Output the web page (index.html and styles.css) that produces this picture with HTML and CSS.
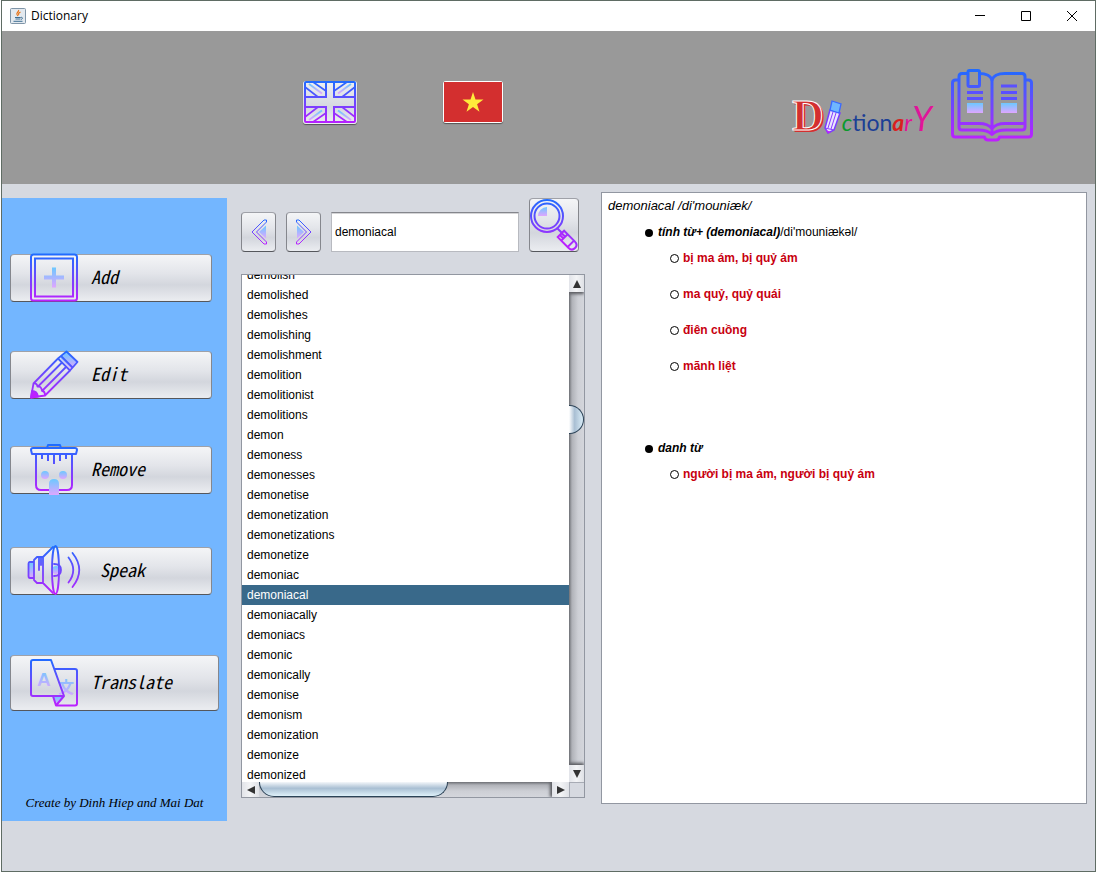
FILE: index.html
```html
<!DOCTYPE html>
<html lang="en">
<head>
<meta charset="utf-8">
<title>Dictionary</title>
<link rel="stylesheet" href="styles.css">
</head>
<body>
<svg class="defs" width="0" height="0" aria-hidden="true">
  <defs>
    <linearGradient id="line" gradientUnits="userSpaceOnUse" x1="0" y1="0" x2="0" y2="48"><stop offset="0" stop-color="#1f6cff"/><stop offset="1" stop-color="#c01fff"/></linearGradient>
    <linearGradient id="lineSmall" gradientUnits="userSpaceOnUse" x1="0" y1="0" x2="0" y2="26"><stop offset="0" stop-color="#1f6cff"/><stop offset="1" stop-color="#c01fff"/></linearGradient>
    <linearGradient id="lineFlag" gradientUnits="userSpaceOnUse" x1="0" y1="0" x2="0" y2="42"><stop offset="0" stop-color="#1f6cff"/><stop offset="1" stop-color="#b81fff"/></linearGradient>
    <linearGradient id="lineBook" gradientUnits="userSpaceOnUse" x1="0" y1="0" x2="0" y2="72"><stop offset="0" stop-color="#1f6cff"/><stop offset="1" stop-color="#c01fff"/></linearGradient>
    <linearGradient id="soft" x1="0" y1="0" x2="0" y2="1"><stop offset="0" stop-color="#6cc8ff"/><stop offset="1" stop-color="#dfa6ff"/></linearGradient>
  </defs>
</svg>
<div class="window">
  <div class="titlebar">
    <svg class="java" viewBox="0 0 16 16" aria-hidden="true">
      <rect x=".5" y=".5" width="15" height="15" rx="1" fill="#e3e9ef" stroke="#7f95a8"/>
      <path d="M8.500 2c1 1.500-2.500 2.500-1.500 4.500l1 1.500M10.500 4c-2 1-2.500 1.800-1.500 3" fill="none" stroke="#e8751a" stroke-width="1.200"/>
      <path d="M5 9.500h5.500M5.500 11h5M10.500 9.500c2.500-.8 2.500 1.500.5 2M3.500 13.300h9" fill="none" stroke="#3e6e93" stroke-width="1"/>
    </svg>
    <span class="title">Dictionary</span>
    <button class="sys" aria-label="Minimize"><svg viewBox="0 0 12 12"><path d="M1 5.500h10"/></svg></button>
    <button class="sys" aria-label="Maximize"><svg viewBox="0 0 12 12"><path d="M1.500 1.500h9v9h-9z"/></svg></button>
    <button class="sys" aria-label="Close"><svg viewBox="0 0 12 12"><path d="M1 1l10 10M11 1L1 11"/></svg></button>
  </div>

  <header class="header">
    <button class="flag flag-uk" aria-label="English">
      <svg viewBox="0 0 52 42">
        <g fill="none" stroke="url(#soft)" stroke-width="2">
          <path d="M5 3L18 12.500"/><path d="M47 3L34 12.500"/><path d="M5 39L18 29.500"/><path d="M47 39L34 29.500"/>
        </g>
        <g fill="none" stroke="url(#lineFlag)" stroke-width="2">
          <rect x="1" y="1" width="50" height="40" rx="1"/>
          <path d="M22 1v15H1M30 1v15h21M22 41V26H1M30 41V26h21"/>
          <path d="M1 6l13 10M9 1l13 9M51 6L38 16M43 1L30 10M1 36l13-10M9 41l13-9M51 36L38 26M43 41L30 32" stroke-width="1.600"/>
        </g>
      </svg>
    </button>
    <button class="flag flag-vn" aria-label="Tiếng Việt">
      <svg viewBox="0 0 58 40"><path fill="#d32f2f" d="M0 0h58v40H0z"/><path fill="#ffeb3b" d="M29 10l2.500 7.500h8l-6.400 4.700 2.400 7.600-6.500-4.700-6.500 4.700 2.400-7.600-6.400-4.700h8z"/></svg>
    </button>
    <h1 class="logo" aria-label="Dictionary">
      <span class="cap">D</span>
      <svg class="logo-pencil" viewBox="0 0 18 34" aria-hidden="true">
        <path d="M6 10L1 28l3 5 6-3 6-17z" fill="#e9e6ff" stroke="#7a3cff" stroke-width="1.500"/>
        <path d="M8 1l9 3-2 9-9-3z" fill="#6fb6ff" stroke="#3a68ff" stroke-width="1.300"/>
        <path d="M9 12L4 28M12 13L7 29M1 28l9 2" fill="none" stroke="#8a3cff"/>
        <path d="M2 30l2 3.500 3-1.500z" fill="#c01fff"/>
      </svg>
      <span class="letters"><span class="green">c</span><span class="blue">tion</span><span class="red">a</span><span class="pink">r</span><span class="pink tall">Y</span></span>
    </h1>
    <svg class="book" viewBox="0 0 82 72" aria-hidden="true">
      <g fill="none" stroke="url(#lineBook)" stroke-width="3" stroke-linejoin="round">
        <path d="M8 11H4.500Q1.500 11 1.500 14V65Q1.500 68 4.500 68H33.500Q34 71 37 71H45Q48 71 48.500 68H77.500Q80.500 68 80.500 65V14Q80.500 11 77.500 11H74"/>
        <path d="M17 4.500H11Q8 4.500 8 7.500V58Q8 61 11 61H27Q37 61 41 65.500Q45 61 55 61H71Q74 61 74 58V7.500Q74 4.500 71 4.500H54Q43 4.500 41 11Q39 4.500 28 4.500"/>
        <path d="M41 11V65M8 54.500H28Q37 54.500 41 59.500Q45 54.500 54 54.500H74"/>
        <path d="M17 3Q17 1.500 18.500 1.500H27Q28.500 1.500 28.500 3V16Q28.500 17.500 27 17.500H18.500Q17 17.500 17 16Z"/>
        <path d="M16 23.500H32M16 29.500H32M50 17H66M50 23.500H66M50 29.500H66" stroke="#5a50ff"/>
      </g>
      <rect x="16" y="34" width="16" height="10" fill="url(#soft)"/><rect x="50" y="34" width="16" height="10" fill="url(#soft)"/>
    </svg>
  </header>

  <main class="main">
    <nav class="sidebar">
      <button class="btn action">
        <svg class="icon" viewBox="0 0 48 48"><g fill="none" stroke="url(#line)" stroke-width="2"><rect x="1" y="0.500" width="46" height="46" rx="2.500"/><rect x="5" y="4.500" width="38" height="38"/></g><path fill="url(#soft)" d="M22 13.500h4v8h8v4h-8v8h-4v-8h-8v-4h8z"/></svg>Add</button>
      <button class="btn action edit">
        <svg class="icon" viewBox="0 0 48 48"><path d="M36.500 1L47.500 11L41 18L30.500 7.500Z" fill="url(#soft)"/><g fill="none" stroke="url(#line)" stroke-width="1.800" stroke-linejoin="round"><path d="M36.500 .5L47.500 11L40 19.500L28 7.500Z"/><path d="M31 5L42.500 16.500"/><path d="M28 7.500L3.500 32.500L1 46.500L15 44.500L40 19.500M32 11.500L7.500 36M36.500 15.500L12 40M3.500 32.500Q7 32 7.500 35.500Q11.500 35 12 40Q15 40 15 44.500"/><path d="M2 40Q7 40 8 45.500L1 46.500Z" fill="#c01fff"/></g></svg>Edit</button>
      <button class="btn action remove">
        <svg class="icon" viewBox="0 0 48 48"><g fill="none" stroke="url(#line)" stroke-width="2" stroke-linejoin="round"><path d="M17 2L18-1H30L31 2M3 2H45Q47 2 47 4L46 8H2L1 4Q1 2 3 2ZM6 8V39Q6 44 11 44H37Q42 44 42 39V8M12 8v5M18 8v7M24 8v10M30 8v7M36 8v5"/></g><g fill="url(#soft)"><circle cx="15" cy="29" r="4"/><circle cx="33" cy="29" r="4"/><path d="M19 49V38Q19 33 24 33Q29 33 29 38V49Z"/></g></svg>Remove</button>
      <button class="btn action speak">
        <svg class="icon" viewBox="0 0 48 48"><rect x="-1.500" y="15" width="5.500" height="16" rx="2" fill="url(#soft)"/><circle cx="26" cy="23" r="4" fill="url(#soft)"/><g fill="none" stroke="url(#line)" stroke-width="1.800" stroke-linejoin="round" stroke-linecap="round"><path d="M4 15H0Q-1.500 15-1.500 17V29Q-1.500 31 0 31H4M7 10H13V36H7L4 33V13ZM9 10V23M11 10V18M13 10L23 0M13 36L23 46"/><ellipse cx="25.500" cy="23" rx="3.500" ry="24"/><path d="M24 17Q31 17 31 23Q31 29 24 29"/><path d="M38.500 10.500Q48 23 38.500 35.500M42.500 6Q56 23 42.500 40"/></g></svg>Speak</button>
      <button class="btn action translate">
        <svg class="icon" viewBox="0 0 48 48"><path d="M23 37H34L26 46Z" fill="url(#soft)"/><g fill="url(#soft)"><text class="glyph-a" x="7" y="27">A</text><text class="glyph-w" x="28" y="34">文</text></g><g fill="none" stroke="url(#line)" stroke-width="2" stroke-linejoin="round"><path d="M3 1H21L34 37H3Q1 37 1 35V3Q1 1 3 1ZM24.500 10H45Q47 10 47 12V44.500Q47 46.500 45 46.500H26L23 37M34 37L26 46.500"/></g></svg>Translate</button>
      <p class="credit">Create by Dinh Hiep and Mai Dat</p>
    </nav>

    <section class="browse">
      <form class="toolbar">
        <button type="button" class="btn step" aria-label="Previous"><svg viewBox="0 0 16 26"><path d="M1 13L13 1H15.500V3L5.500 13L15.500 23V25H13Z" fill="none" stroke="url(#lineSmall)"/><path d="M8 13L15 6.500V19.500Z" fill="url(#soft)"/></svg></button>
        <button type="button" class="btn step" aria-label="Next"><svg viewBox="0 0 16 26"><path d="M15 13L3 1H.5V3L10.500 13L.5 23V25H3Z" fill="none" stroke="url(#lineSmall)"/><path d="M8 13L1 6.500V19.500Z" fill="url(#soft)"/></svg></button>
        <input class="query" type="text" value="demoniacal" aria-label="Search word">
        <button type="button" class="btn search" aria-label="Search"><svg viewBox="0 0 48 52"><path d="M8 17A9 9 0 0 1 17 8V17Z" fill="url(#soft)"/><g fill="none" stroke="url(#line)" stroke-width="2"><circle cx="17" cy="17" r="16"/><circle cx="17" cy="17" r="12.500"/><path d="M27 29L32 34"/><g transform="rotate(45 38 42)"><path d="M28 37.500h15q5 0 5 4.500t-5 4.500H28zM33 37.500v9M28 41h5M28 43.500h5M42 37.500v9"/></g></g></svg></button>
      </form>
      <div class="listbox">
        <ul class="words" role="listbox" aria-label="Words">
          <li role="option">demolish</li><li role="option">demolished</li><li role="option">demolishes</li><li role="option">demolishing</li><li role="option">demolishment</li><li role="option">demolition</li><li role="option">demolitionist</li><li role="option">demolitions</li><li role="option">demon</li><li role="option">demoness</li><li role="option">demonesses</li><li role="option">demonetise</li><li role="option">demonetization</li><li role="option">demonetizations</li><li role="option">demonetize</li><li role="option">demoniac</li><li role="option" aria-selected="true">demoniacal</li><li role="option">demoniacally</li><li role="option">demoniacs</li><li role="option">demonic</li><li role="option">demonically</li><li role="option">demonise</li><li role="option">demonism</li><li role="option">demonization</li><li role="option">demonize</li><li role="option">demonized</li>
        </ul>
        <div class="vbar">
          <button class="arrow up" aria-label="Scroll up"><svg viewBox="0 0 8 8"><path d="M4 0L8 8H0z"/></svg></button>
          <span class="vthumb"></span>
          <button class="arrow down" aria-label="Scroll down"><svg viewBox="0 0 8 8"><path d="M0 0H8L4 8z"/></svg></button>
        </div>
        <div class="hbar">
          <button class="arrow left" aria-label="Scroll left"><svg viewBox="0 0 8 8"><path d="M8 0V8L0 4z"/></svg></button>
          <span class="hthumb"></span>
          <button class="arrow right" aria-label="Scroll right"><svg viewBox="0 0 8 8"><path d="M0 0L8 4L0 8z"/></svg></button>
        </div>
        <span class="corner"></span>
      </div>
    </section>

    <article class="detail">
      <p class="head">demoniacal /di'mouniæk/</p>
      <ul class="senses">
        <li><p><b>tính từ+ (demoniacal)</b>/di'mouniækəl/</p>
          <ul class="meanings"><li>bị ma ám, bị quỷ ám</li><li>ma quỷ, quỷ quái</li><li>điên cuồng</li><li>mãnh liệt</li></ul>
        </li>
        <li><p><b>danh từ</b></p>
          <ul class="meanings"><li>người bị ma ám, người bị quỷ ám</li></ul>
        </li>
      </ul>
    </article>
  </main>
</div>
</body>
</html>
```
FILE: styles.css
```css
*, *::before { box-sizing: border-box; }
body { margin: 0; background: #fff; font: 12px/16px "Liberation Sans", Arial, sans-serif; color: #000; }
button { font: inherit; color: inherit; padding: 0; border: 0; background: none; }
svg { display: block; overflow: visible; }
ul, p, h1 { margin: 0; padding: 0; }
ul { list-style: none; }
.defs { position: absolute; }

.window { display: flex; flex-direction: column; min-height: calc(100vh - 1px); margin-left: 1px; border: 1px solid #5f6c64; background: #d6d9e0; }

.titlebar { display: flex; align-items: center; height: 30px; padding-left: 8px; background: #fff; }
.java { width: 16px; height: 16px; margin-right: 5px; }
.title { flex: 1; font: 12px/16px "Open Sans", "Noto Sans", sans-serif; }
.sys { display: grid; place-items: center; width: 46px; height: 30px; }
.sys svg { width: 12px; height: 12px; fill: none; stroke: #000; stroke-width: 1; }

.header { display: flex; align-items: flex-start; height: 153px; padding: 38px 62px 0 301px; background: #999; }
.flag { margin-top: 12px; border-radius: 3px; box-shadow: 0 1px 1px #555; }
.flag svg { width: 100%; height: 100%; }
.flag-uk { width: 54px; height: 43px; padding: 0 1px 1px; background: linear-gradient(#eff0f3, #d5d8df 60%, #eceef2); }
.flag-vn { width: 60px; height: 42px; margin-left: 86px; padding: 1px; background: #fff; }
.logo { display: flex; align-items: flex-end; height: 68px; margin-left: auto; font-weight: normal; }
.cap { font: bold 44px/42px "Liberation Serif", serif; color: #d32f2f; -webkit-text-stroke: 1px #fff; text-shadow: 1px 1px #d32f2f, 2px 2px #d32f2f; }
.logo-pencil { width: 18px; height: 34px; margin-bottom: 3px; }
.letters { font: italic 23px/30px "Lato", sans-serif; }
.green { color: #0a9a2c; }
.blue { color: #1c3f95; font-style: normal; }
.red { color: #d8201f; font-weight: bold; }
.pink { color: #e0149a; }
.tall { font-size: 34px; }
.book { width: 82px; height: 72px; margin-left: 19px; }

.main { flex: 1; display: grid; grid-template-columns: 225px 358px minmax(0, 1fr); padding: 8px 8px 50px 0; }

.btn { border: 1px solid; border-color: #9fa1a8 #85878d #55575c; border-radius: 4px; background: linear-gradient(#f4f5f7, #e3e5ea 40%, #d3d6dd 65%, #e9ebef 97%); }

.sidebar { display: flex; flex-direction: column; margin-top: 6px; padding: 56px 8px 10px; background: #73b6ff; }
.action { display: flex; align-items: flex-start; width: 202px; height: 48px; padding-left: 19px; gap: 13px; font: italic 18px/42px "Noto Sans Mono CJK JP", "DejaVu Sans Mono", monospace; }
.icon { width: 48px; height: 48px; margin-top: -1px; flex: none; }
.edit { margin-top: 49px; }
.remove { margin-top: 47px; }
.speak { margin-top: 53px; gap: 22px; }
.translate { margin-top: 60px; width: auto; height: 56px; line-height: 50px; }
.translate .icon { margin-top: 3px; }
.glyph-a { font: bold 19px "Liberation Sans", sans-serif; }
.glyph-w { font: bold 16px "Noto Sans CJK JP", sans-serif; }
.credit { margin-top: auto; text-align: center; font: italic 13px/16px "Liberation Serif", serif; }

.browse { display: flex; flex-direction: column; margin: 6px 0 23px 14px; }
.toolbar { display: flex; align-items: flex-end; gap: 10px; padding-right: 6px; }
.step { display: grid; place-items: center; width: 35px; height: 40px; }
.step svg { width: 16px; height: 26px; }
.query { flex: 1; min-width: 0; height: 40px; padding: 0 3px; border: 1px solid #b8bac0; border-top: 1px solid #84868c; box-shadow: inset 0 1px #d4d4d6; background: #fff; font: 12px/16px "Liberation Sans", Arial, sans-serif; }
.search { width: 50px; height: 54px; }
.search svg { width: 48px; height: 52px; }

.listbox { flex: 1 1 0; min-height: 300px; display: grid; grid-template: minmax(0, 1fr) 15px / minmax(0, 1fr) 15px; margin-top: 22px; border: 1px solid #9297a1; }
.words { overflow: hidden; background: #fff; }
.words li { height: 20px; padding-left: 5px; line-height: 20px; }
.words li:first-child { margin-top: -10px; }
.words [aria-selected] { background: #39698a; color: #fff; }
.vbar { display: flex; flex-direction: column; justify-content: space-between; overflow: hidden; background: linear-gradient(90deg, #6d6f74, #b0b2b8 20%, #cdcfd5 60%, #d4d6dc); }
.hbar { display: flex; overflow: hidden; background: linear-gradient(#6d6f74, #b0b2b8 20%, #cdcfd5 60%, #d4d6dc); }
.arrow { display: grid; place-items: center; flex: none; background: linear-gradient(90deg, #e2e4e9, #f3f4f6, #dfe1e6); }
.arrow svg { width: 8px; height: 8px; fill: #333; }
.up, .down { width: 15px; height: 17px; }
.left, .right { width: 17px; height: 15px; }
.up { box-shadow: 0 2px 3px #55575c; }
.down { box-shadow: 0 -2px 3px #55575c; }
.right { margin-left: auto; box-shadow: -2px 0 3px #55575c; }
.vthumb { width: 15px; height: 29px; margin-bottom: 218px; border: 1px solid #2c4357; border-left: 0; border-radius: 0 15px 15px 0; background: linear-gradient(90deg, #fff, #a9bfd3 40%, #d9ecf7); }
.hthumb { width: 189px; border: 1px solid #2c4357; border-top: 0; border-radius: 0 0 15px 15px; background: linear-gradient(#f4f7fa, #a9bfd3 45%, #dff1fa); }
.corner { border: solid #a7abb4; border-width: 1px 0 0 1px; }

.detail { margin: 0 0 17px 16px; padding: 5px 6px; border: 1px solid #9297a1; background: #fff; }
.head { font-size: 13px; font-style: italic; }
.senses { padding-left: 36px; }
.senses > li { margin-top: 10px; margin-bottom: 66px; }
.senses p, .meanings li { display: flex; align-items: center; }
.senses b { font-style: italic; }
.senses p::before { content: ""; width: 8px; height: 8px; margin: 1px 5px 0 1px; border-radius: 50%; background: #000; }
.meanings { padding: 10px 0 0 26px; display: grid; gap: 20px; }
.meanings li { color: #c8000f; font-weight: bold; }
.meanings li::before { content: ""; width: 9px; height: 9px; margin: 1px 4px 0 0; border: 1px solid #000; border-radius: 50%; }
```
